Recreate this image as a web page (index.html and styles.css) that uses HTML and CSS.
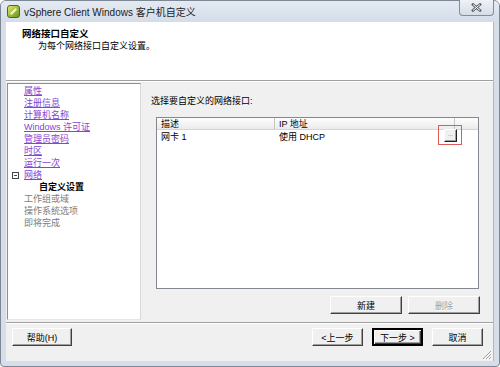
FILE: index.html
```html
<!DOCTYPE html>
<html>
<head>
    <meta charset="UTF-8">
    <title>vSphere Client Windows 客户机自定义</title>
    <link rel="stylesheet" href="styles.css">
</head>
<body>
<div class="window">
    <div class="caption">
        <svg class="app-icon" width="13" height="13" viewBox="0 0 13 13">
            <defs>
                <linearGradient id="ig" x1="0" y1="0" x2="1" y2="1">
                    <stop offset="0" stop-color="#e4ec6a"/>
                    <stop offset="1" stop-color="#5f8f1e"/>
                </linearGradient>
            </defs>
            <rect x="0.5" y="0.5" width="12" height="12" rx="2.5" fill="url(#ig)" stroke="#4d6b1a"/>
            <path d="M3 8.5 L8.5 3 L10 4.5 L4.5 10 Z" fill="#fffbd0" opacity="0.9"/>
        </svg>
        <span class="caption-text">vSphere Client Windows 客户机自定义</span>
        <span class="close-btn">
            <svg width="11" height="9" viewBox="0 0 11 9">
                <path d="M2 1.5 L9 7.5 M9 1.5 L2 7.5" stroke="#5a5f66" stroke-width="2.6" stroke-linecap="square"/>
                <path d="M2 1.5 L9 7.5 M9 1.5 L2 7.5" stroke="#fff" stroke-width="1"/>
            </svg>
        </span>
    </div>

    <div class="client">
        <div class="header">
            <div class="header-title">网络接口自定义</div>
            <div class="header-sub">为每个网络接口自定义设置。</div>
        </div>

        <div class="main">
            <ul class="steps">
                <li class="link">属性</li>
                <li class="link">注册信息</li>
                <li class="link">计算机名称</li>
                <li class="link">Windows 许可证</li>
                <li class="link">管理员密码</li>
                <li class="link">时区</li>
                <li class="link">运行一次</li>
                <li class="link"><em class="fold"></em>网络</li>
                <li class="current">自定义设置</li>
                <li class="todo">工作组或域</li>
                <li class="todo">操作系统选项</li>
                <li class="todo">即将完成</li>
            </ul>

            <div class="content">
                <div class="label">选择要自定义的网络接口:</div>
                <div class="grid">
                    <div class="grid-head">
                        <span class="col-a">描述</span>
                        <span class="col-b">IP 地址</span>
                        <span class="col-c"></span>
                    </div>
                    <div class="grid-row">
                        <span class="col-a">网卡 1</span>
                        <span class="col-b">使用 DHCP</span>
                        <span class="col-c"></span>
                    </div>
                    <div class="mark"><span class="dots">...</span></div>
                </div>
                <div class="grid-btns">
                    <span class="btn wide">新建</span>
                    <span class="btn wide disabled">删除</span>
                </div>
            </div>
        </div>

        <div class="footer">
            <span class="btn help">帮助(H)</span>
            <span class="spacer"></span>
            <span class="btn">&lt;上一步</span>
            <span class="btn default">下一步 &gt;</span>
            <span class="btn">取消</span>
            <svg class="grip" width="11" height="11" viewBox="0 0 11 11">
                <path d="M10 2 L2 10 M10 5 L5 10 M10 8 L8 10" stroke="#a0a0a0" stroke-width="1"/>
                <path d="M11 3 L3 11 M11 6 L6 11 M11 9 L9 11" stroke="#fff" stroke-width="1"/>
            </svg>
        </div>
    </div>
</div>
</body>
</html>
```

FILE: styles.css
```css
* {
    margin: 0;
    padding: 0;
    box-sizing: border-box;
}

body {
    width: 500px;
    height: 367px;
    background: #fff;
    font-family: "Liberation Sans", "Noto Sans CJK SC", sans-serif;
    font-size: 9px;
    color: #000;
}

ul, li {
    list-style: none;
}

.window {
    width: 500px;
    height: 367px;
    border: 1px solid #7d8894;
    border-radius: 6px 6px 4px 4px;
    background: #d7dee7;
    padding: 0 5px 5px;
    display: flex;
    flex-direction: column;
}

/* 标题栏 */
.caption {
    height: 21px;
    display: flex;
    align-items: center;
    position: relative;
    background: linear-gradient(#e4eaf2, #d3dde9);
    margin: 0 -5px;
    padding-left: 6px;
    border-radius: 5px 5px 0 0;
}

.app-icon {
    margin-right: 4px;
}

.caption-text {
    font-size: 10px;
    color: #1b1b1b;
}

.close-btn {
    position: absolute;
    top: -1px;
    right: 5px;
    width: 35px;
    height: 16px;
    border: 1px solid #858c96;
    border-top: none;
    border-radius: 0 0 4px 4px;
    background: linear-gradient(#eef2f7, #d6dde6);
    display: flex;
    align-items: center;
    justify-content: center;
}

.client {
    flex: 1;
    display: flex;
    flex-direction: column;
    background: #f0f0f0;
    border-right: 1px solid #b0b8c2;
}

/* 顶部说明 */
.header {
    height: 59px;
    background: #fff;
    border-bottom: 1px solid #a0a0a0;
    padding: 6px 0 0 16px;
}

.header-title {
    font-weight: bold;
    font-size: 9.5px;
    line-height: 12px;
}

.header-sub {
    padding-left: 16px;
    line-height: 13px;
}

.main {
    height: 241px;
    border-top: 1px solid #fff;
    display: flex;
    padding: 1px 0 0 1px;
}

/* 左侧步骤 */
.steps {
    width: 134px;
    height: 237px;
    background: #fff;
    border: 1px solid #8e8f8f;
    border-right-color: #d8d8d8;
    border-bottom-color: #e6e6e6;
    padding: 1px 0 0 16px;
}

.steps li {
    line-height: 12px;
    height: 12px;
    white-space: nowrap;
}

.steps .link {
    color: #8445d0;
    text-decoration: underline;
}

.steps .current {
    font-weight: bold;
    padding-left: 15px;
}

.steps .todo {
    color: #7d7d7d;
}

.fold {
    display: inline-block;
    width: 7px;
    height: 7px;
    border: 1px solid #444;
    margin: 0 5px 0 -12px;
    vertical-align: -1px;
    background: linear-gradient(#444, #444) no-repeat center / 3px 1px;
}

/* 右侧内容 */
.content {
    flex: 1;
    padding: 12px 0 0 10px;
}

.label {
    line-height: 12px;
}

.grid {
    position: relative;
    width: 323px;
    height: 172px;
    margin: 10px 0 0 5px;
    background: #fff;
    border: 1px solid #828790;
}

.grid-head, .grid-row {
    display: flex;
    height: 12px;
    line-height: 12px;
}

.grid-head {
    background: linear-gradient(#fdfdfd, #ebebeb);
    border-bottom: 1px solid #d5d5d5;
    height: 12px;
}

.grid-row {
    margin-top: 1px;
}

.col-a {
    width: 118px;
    padding-left: 4px;
}

.col-b {
    width: 180px;
    padding-left: 4px;
}

.grid-head .col-a, .grid-head .col-b {
    border-right: 1px solid #c5c5c5;
}

.col-c {
    flex: 1;
}

/* 红框标注 */
.mark {
    position: absolute;
    left: 281px;
    top: 7px;
    width: 24px;
    height: 20px;
    border: 1px solid #e05a5a;
    padding: 3px 0 0 5px;
}

.dots {
    display: block;
    width: 13px;
    height: 13px;
    background: #f0f0f0;
    border: 1px solid;
    border-color: #fff #202020 #202020 #fff;
    box-shadow: inset -1px -1px #a0a0a0;
    font-size: 6px;
    line-height: 9px;
    text-align: center;
    color: #666;
}

.grid-btns {
    width: 329px;
    display: flex;
    justify-content: flex-end;
    gap: 6px;
    margin-top: 7px;
}

/* 按钮 */
.btn {
    display: inline-flex;
    align-items: center;
    justify-content: center;
    width: 51px;
    height: 18px;
    background: #f0f0f0;
    border: 1px solid;
    border-color: #fff #404040 #404040 #fff;
    box-shadow: inset -1px -1px #a0a0a0;
    white-space: nowrap;
}

.btn.wide {
    width: 72px;
}

.btn.disabled {
    color: #a0a0a0;
    text-shadow: 1px 1px #fff;
}

.btn.default {
    border: 2px solid #000;
    box-shadow: inset 1px 1px #fff, inset -1px -1px #404040, inset -2px -2px #a0a0a0;
}

.btn.help {
    width: 60px;
}

.footer {
    flex: 1;
    position: relative;
    border-top: 1px solid #a0a0a0;
    box-shadow: inset 0 1px #fff;
    display: flex;
    align-items: flex-start;
    gap: 9px;
    padding: 5px 10px 0 6px;
}

.spacer {
    flex: 1;
}

.grip {
    position: absolute;
    right: 1px;
    bottom: 1px;
}
```
